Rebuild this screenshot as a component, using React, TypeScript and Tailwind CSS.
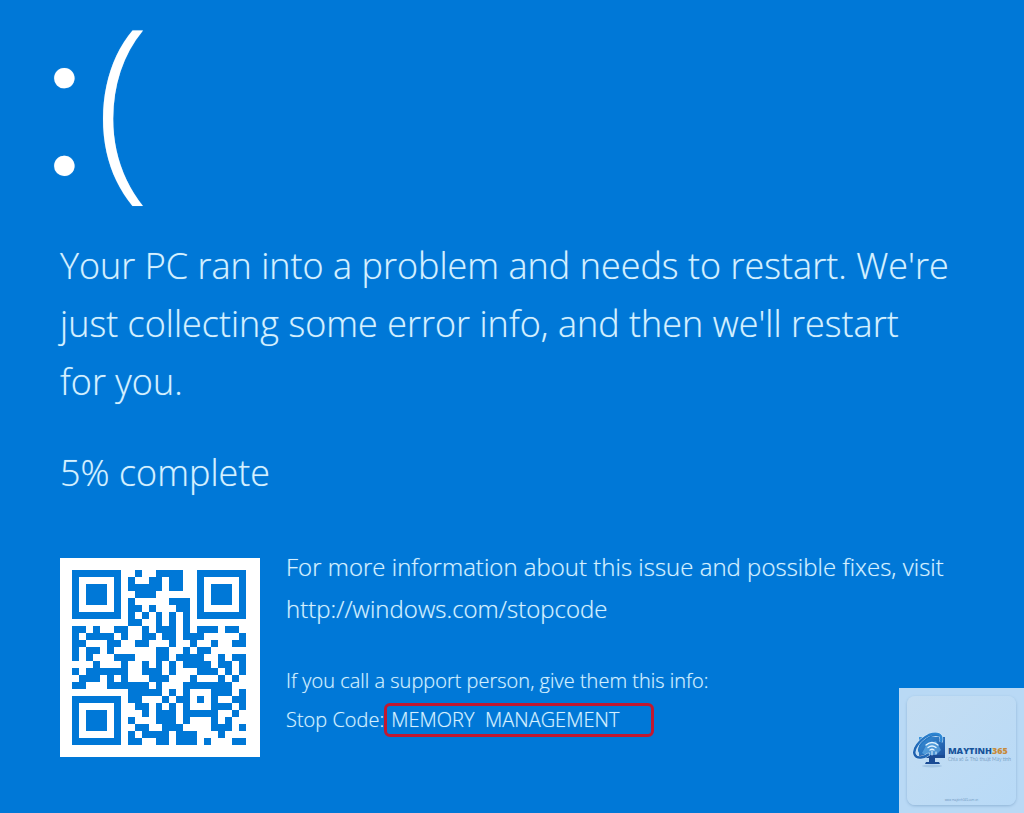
const QR_ROWS = [
  "1111111001001111001111111",
  "1000001010011011001000001",
  "1011101011111011001011101",
  "1011101001110000001011101",
  "1011101010000011101011101",
  "1000001011010001101000001",
  "1111111010101010101111111",
  "0000000011001010100000000",
  "1101001100101110101110110",
  "1011110100110110111000001",
  "1100011001100010010010011",
  "1011010000001100101100000",
  "1010001110001101111001011",
  "0001000100101010111101101",
  "1011111100111010001110101",
  "0111010100011100010001010",
  "1100011111101000111111100",
  "0000000011111010100011101",
  "1111111011000101101010011",
  "1000001001101010100011101",
  "1011101000101110111110010",
  "1011101010001110100010100",
  "1011101001100111000011101",
  "1000001010111101110001000",
  "1111111011001101110100011",
];

function QrCode() {
  const path = QR_ROWS.flatMap((row, y) =>
    [...row].map((cell, x) => (cell === "1" ? `M${x} ${y}h1v1h-1z` : ""))
  ).join("");

  return (
    <div className="h-[199px] w-[200px] shrink-0 bg-white py-3 pr-[14px] pl-3">
      <svg
        viewBox="0 0 25 25"
        preserveAspectRatio="none"
        className="h-full w-full"
        role="img"
        aria-label="QR code"
      >
        <path d={path} fill="#0078d7" shapeRendering="crispEdges" />
      </svg>
    </div>
  );
}

function MonitorLogo() {
  return (
    <svg viewBox="0 0 36 38" className="h-[38px] w-[36px] shrink-0" aria-hidden="true">
      <defs>
        <linearGradient id="screen" x1="0" y1="0" x2="1" y2="1">
          <stop offset="0" stopColor="#3a94dc" />
          <stop offset="1" stopColor="#1a4c9a" />
        </linearGradient>
        <linearGradient id="ring" x1="0" y1="1" x2="1" y2="0">
          <stop offset="0" stopColor="#1d5dab" />
          <stop offset="1" stopColor="#2f8bd8" />
        </linearGradient>
      </defs>
      <ellipse cx="20" cy="35" rx="10" ry="1.5" fill="#8fb6d8" opacity="0.6" />
      <path d="M7 6h26v21H7z" fill="url(#screen)" />
      <path d="M7 24h26v3H7z" fill="#1a4b94" />
      <path d="M17 27h6v4h4l1 2H13l1-2h3z" fill="#1a4b94" />
      <path d="M10 22l5-9 9-3 5 9-5 5H13z" fill="#69b5ec" opacity="0.6" />
      <g fill="none" stroke="#e4f4ff" strokeWidth="1.3" strokeLinecap="round">
        <path d="M14 14q6-5 12 0" />
        <path d="M16 16.500q4-3 8 0" />
        <path d="M18 19q2-1.500 4 0" />
        <path d="M20 20v4M17 22v2M24 21v2" strokeWidth="1" />
      </g>
      <path
        d="M29 11C31 3 25 1 17 4 7 9 0 19 3 24c2 4 9 3 14-1"
        fill="none"
        stroke="#d5eafb"
        strokeWidth="3.500"
      />
      <path
        d="M29 11C31 3 25 1 17 4 7 9 0 19 3 24c2 4 9 3 14-1"
        fill="none"
        stroke="url(#ring)"
        strokeWidth="2.500"
      />
      <path d="M27 5C20 2 9 11 7 17c-1 3 0 5 3 5" fill="none" stroke="#2878c4" strokeWidth="1.500" />
    </svg>
  );
}

function Watermark() {
  return (
    <aside className="absolute right-0 bottom-0 flex h-[125px] w-[125px] bg-[#b9d9f5] p-2">
      <div className="flex w-full flex-col items-center rounded-lg bg-linear-to-br from-[#c4ddf2] to-[#b8daf7] pt-[35px] font-['Open_Sans',sans-serif] shadow-[0_1px_3px_#8fb4d6]">
        <div className="flex items-center">
          <MonitorLogo />
          <div className="pt-2 whitespace-nowrap">
            <p className="text-[9px] leading-[10px] font-extrabold text-[#17549b]">
              MAYTINH<span className="text-[#c58a3c]">365</span>
            </p>
            <p className="font-[Lato,sans-serif] text-[5px] leading-[6px] text-[#3f6f9e]">
              Chia sẻ &amp; Thủ thuật Máy tính
            </p>
          </div>
        </div>
        <p className="mt-auto mb-0.5 text-[3px] leading-[5px] text-[#3f6f9e]">www.maytinh365.com.vn</p>
      </div>
    </aside>
  );
}

export default function App() {
  return (
    <main className="relative min-h-screen bg-[#0078d7] px-[60px] pb-[55px] font-['Open_Sans','Noto_Sans',sans-serif] font-light text-[#d5f1ff] text-shadow-[0_0_1px_#d5f1ff80]">
      <h1 className="-ml-[22px] flex h-[237px] items-baseline gap-1 text-[202px] leading-[179px] text-white">
        <span className="font-[Lato,sans-serif] text-[220px] leading-[179px]">:</span>
        <span>(</span>
      </h1>

      <p className="max-w-[890px] text-[36px] leading-[58px]">
        Your PC ran into a problem and needs to restart. We're just collecting some error info, and
        then we'll restart for you.
      </p>
      <p className="mt-[33px] text-[36px] leading-[58px]">5% complete</p>

      <section className="mt-14 flex gap-[26px]">
        <QrCode />
        <div className="-mt-3">
          <p className="text-[24px] leading-[42px]">
            For more information about this issue and possible fixes, visit
            <br />
            <a href="http://windows.com/stopcode">http://windows.com/stopcode</a>
          </p>
          <p className="mt-8 text-[20px] leading-[38px]">
            If you call a support person, give them this info:
          </p>
          <p className="flex items-center pt-px text-[20px] leading-[38px]">
            Stop Code:
            <span className="flex h-[34px] w-[270px] items-center rounded-md border-3 border-[#c21830] pl-1 whitespace-pre">
              MEMORY  MANAGEMENT
            </span>
          </p>
        </div>
      </section>

      <Watermark />
    </main>
  );
}
